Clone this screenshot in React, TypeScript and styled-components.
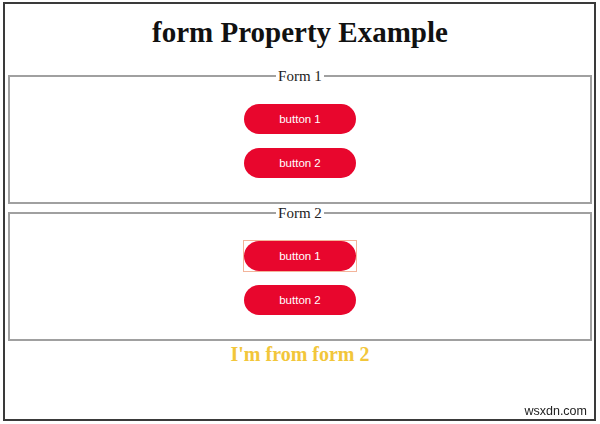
import styled, { createGlobalStyle } from 'styled-components';

const GlobalStyle = createGlobalStyle`
  html, body {
    margin: 0;
    padding: 0;
    background: #fff;
  }
  body {
    font-family: "Liberation Serif", "Times New Roman", serif;
  }
`;

const Frame = styled.div`
  box-sizing: border-box;
  margin: 2px 4px 0 3px;
  height: 419px;
  border: 2px solid #3a3a3a;
  padding: 0 2px 0 3px;
`;

const Title = styled.h1`
  margin: 0;
  padding-top: 12px;
  height: 65px;
  box-sizing: border-box;
  text-align: center;
  font-size: 29px;
  font-weight: 700;
  color: #111;
`;

const FormBox = styled.fieldset`
  margin: 0 0 2px;
  padding: 21px 0 24px;
  border: 2px solid #a0a0a0;
  display: flex;
  flex-direction: column;
  align-items: center;
  gap: 14px;
`;

const Legend = styled.legend`
  margin: 0 auto;
  padding: 0 2px;
  font-size: 15px;
  line-height: 14px;
  color: #222;
`;

const PillButton = styled.button<{ $focused?: boolean }>`
  position: relative;
  width: 112px;
  height: 30px;
  border: none;
  border-radius: 15px;
  background: #e8062d;
  color: #fff;
  font-family: "Liberation Sans", Arial, sans-serif;
  font-size: 11.5px;
  cursor: pointer;
  outline: none;

  &::after {
    content: '';
    display: ${({ $focused }) => ($focused ? 'block' : 'none')};
    position: absolute;
    inset: -1px;
    border: 1px solid #f3b49a;
  }
`;

const Note = styled.p`
  margin: 1px 0 0;
  text-align: center;
  font-size: 20px;
  font-weight: 700;
  color: #f2c63a;
`;

const Watermark = styled.span`
  position: fixed;
  right: 13px;
  bottom: 6px;
  font-family: "Liberation Sans", Arial, sans-serif;
  font-size: 12.5px;
  color: #222;
`;

const forms = [
  { name: 'Form 1', focused: false },
  { name: 'Form 2', focused: true },
];

export default function App() {
  return (
    <>
      <GlobalStyle />
      <Frame>
        <Title>form Property Example</Title>
        {forms.map((form) => (
          <FormBox key={form.name}>
            <Legend>{form.name}</Legend>
            <PillButton type="button" $focused={form.focused}>button 1</PillButton>
            <PillButton type="button">button 2</PillButton>
          </FormBox>
        ))}
        <Note>I&apos;m from form 2</Note>
      </Frame>
      <Watermark>wsxdn.com</Watermark>
    </>
  );
}
